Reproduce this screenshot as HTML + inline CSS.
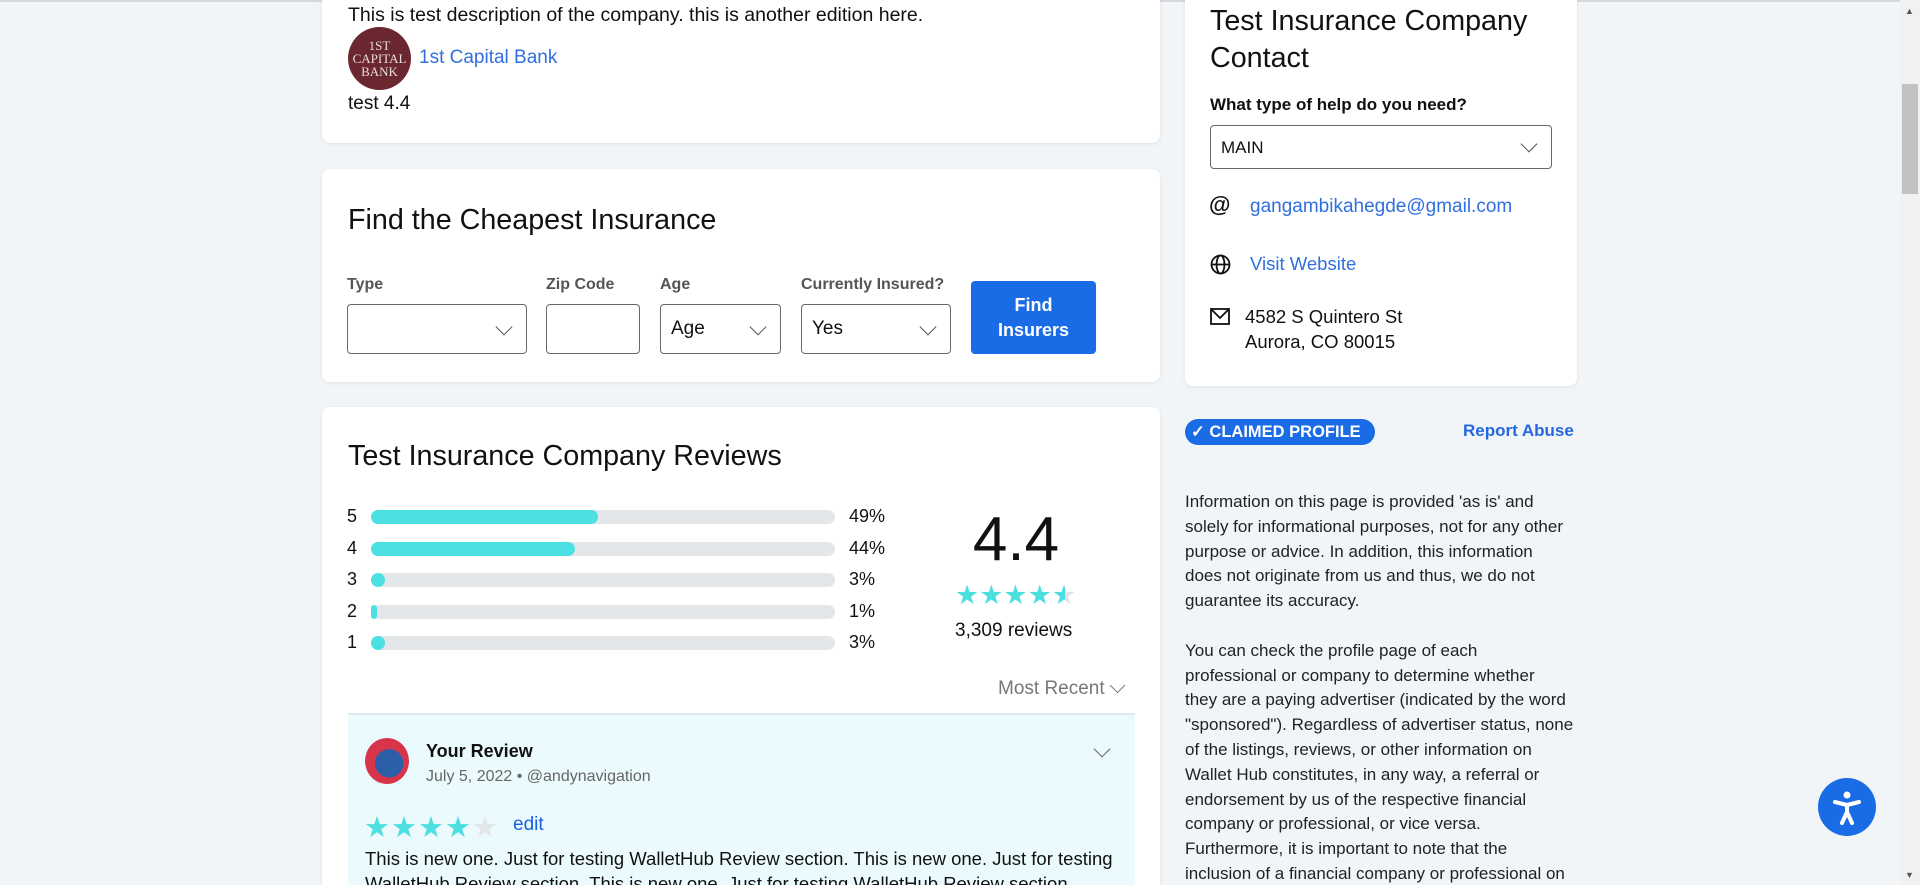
<!DOCTYPE html>
<html><head><meta charset="utf-8">
<style>
*{box-sizing:border-box;margin:0;padding:0}
html,body{width:1920px;height:885px;overflow:hidden}
body{background:#f2f5f8;font-family:"Liberation Sans",Arial,sans-serif;color:#111;position:relative}
.topline{position:absolute;left:0;top:0;width:1900px;height:2px;background:#d5d9de}
.card{position:absolute;background:#fff;border-radius:8px;box-shadow:0 1px 4px rgba(0,0,0,.08)}
.abs{position:absolute;white-space:nowrap}
.blue{color:#2f6fe0}
.sel{position:absolute;border:1px solid #606870;border-radius:4px;background:#fff}
.chev{position:absolute;width:12px;height:12px;border-right:1.6px solid #555;border-bottom:1.6px solid #555;transform:rotate(45deg)}
.lab{position:absolute;font-size:16px;color:#555;font-weight:bold;white-space:nowrap}
.bar{position:absolute;left:371px;width:464px;height:14px;border-radius:7px;background:#e3e7ea}
.fill{height:14px;border-radius:7px;background:#4ce0e2}
.num{position:absolute;left:347px;font-size:18px}
.pct{position:absolute;left:849px;font-size:18px}
.star{color:#4ddfe0}
.disc{position:absolute;left:1185px;top:490px;font-size:17px;line-height:24.8px;color:#222;white-space:nowrap}
</style></head><body>
<div class="topline"></div>

<div class="card" style="left:322px;top:-10px;width:838px;height:153px">
  <div class="abs" style="left:26px;top:14px;font-size:19.5px">This is test description of the company. this is another edition here.</div>
  <div style="position:absolute;left:26px;top:37px;width:63px;height:63px;border-radius:50%;background:#6b2730;color:#e8dcdc;font-family:'Liberation Serif',serif;text-align:center;font-size:13px;line-height:13px;padding-top:12px">1ST<br>CAPITAL<br>BANK</div>
  <div class="abs blue" style="left:97px;top:57px;font-size:19px">1st Capital Bank</div>
  <div class="abs" style="left:26px;top:103px;font-size:19px">test 4.4</div>
</div>

<div class="card" style="left:322px;top:169px;width:838px;height:213px">
  <div class="abs" style="left:26px;top:35px;font-size:28.7px">Find the Cheapest Insurance</div>
  <div class="lab" style="left:25px;top:107px">Type</div>
  <div class="lab" style="left:224px;top:107px">Zip Code</div>
  <div class="lab" style="left:338px;top:107px">Age</div>
  <div class="lab" style="left:479px;top:107px">Currently Insured?</div>
  <div class="sel" style="left:25px;top:135px;width:180px;height:50px"><div class="chev" style="right:16px;top:16px"></div></div>
  <div class="sel" style="left:224px;top:135px;width:94px;height:50px"></div>
  <div class="sel" style="left:338px;top:135px;width:121px;height:50px"><div class="abs" style="left:10px;top:13px;font-size:19px">Age</div><div class="chev" style="right:16px;top:16px"></div></div>
  <div class="sel" style="left:479px;top:135px;width:150px;height:50px"><div class="abs" style="left:10px;top:13px;font-size:19px">Yes</div><div class="chev" style="right:16px;top:16px"></div></div>
  <div style="position:absolute;left:649px;top:112px;width:125px;height:73px;background:#1a6be6;border-radius:4px;color:#fff;font-weight:bold;font-size:18px;text-align:center;line-height:25px;padding-top:12px">Find<br>Insurers</div>
</div>

<div class="card" style="left:322px;top:407px;width:838px;height:500px"></div>
<div class="abs" style="left:348px;top:440px;font-size:28.7px">Test Insurance Company Reviews</div>
<div class="num" style="top:506px">5</div><div class="bar" style="top:510px"><div class="fill" style="width:49%"></div></div><div class="pct" style="top:506px">49%</div>
<div class="num" style="top:538px">4</div><div class="bar" style="top:542px"><div class="fill" style="width:44%"></div></div><div class="pct" style="top:538px">44%</div>
<div class="num" style="top:569px">3</div><div class="bar" style="top:573px"><div class="fill" style="width:14px"></div></div><div class="pct" style="top:569px">3%</div>
<div class="num" style="top:601px">2</div><div class="bar" style="top:605px"><div class="fill" style="width:6px"></div></div><div class="pct" style="top:601px">1%</div>
<div class="num" style="top:632px">1</div><div class="bar" style="top:636px"><div class="fill" style="width:14px"></div></div><div class="pct" style="top:632px">3%</div>
<div class="abs" style="left:956px;top:505px;width:120px;text-align:center;font-size:62px;line-height:70px">4.4</div>
<div class="abs star" style="left:955px;top:580px;font-size:27px;letter-spacing:0px">★★★★<span style="background:linear-gradient(90deg,#4ddfe0 55%,#dfe3e6 55%);-webkit-background-clip:text;color:transparent">★</span></div>
<div class="abs" style="left:955px;top:620px;font-size:19px">3,309 reviews</div>
<div class="abs" style="left:998px;top:678px;font-size:19px;color:#777">Most Recent</div>
<div class="chev" style="left:1112px;top:680px;width:11px;height:11px;border-color:#777"></div>

<div style="position:absolute;left:348px;top:713px;width:787px;height:180px;background:#ebfbfd;border-top:2px solid #dfe8ea"></div>
<div style="position:absolute;left:365px;top:738px;width:44px;height:46px;border-radius:50%;background:radial-gradient(circle at 55% 55%,#2d5fa8 40%,#d8354a 41%)"></div>
<div class="abs" style="left:426px;top:741px;font-size:18px;font-weight:bold">Your Review</div>
<div class="abs" style="left:426px;top:768px;font-size:16px;color:#666">July 5, 2022 • @andynavigation</div>
<div class="chev" style="left:1096px;top:743px;width:12px;height:12px;border-color:#666"></div>
<div class="abs" style="left:364px;top:810px;font-size:29px;letter-spacing:1px"><span class="star">★★★★</span><span style="color:#e3e6e8">★</span></div>
<div class="abs blue" style="left:513px;top:814px;font-size:19px;color:#1a5fe0">edit</div>
<div class="abs" style="left:365px;top:848px;font-size:18.5px">This is new one. Just for testing WalletHub Review section. This is new one. Just for testing</div>
<div class="abs" style="left:365px;top:873px;font-size:18.5px">WalletHub Review section. This is new one. Just for testing WalletHub Review section.</div>

<div class="card" style="left:1185px;top:-10px;width:392px;height:396px"></div>
<div class="abs" style="left:1210px;top:3px;font-size:28.7px;line-height:37px">Test Insurance Company<br>Contact</div>
<div class="abs" style="left:1210px;top:95px;font-size:17px;font-weight:bold">What type of help do you need?</div>
<div class="sel" style="left:1210px;top:125px;width:342px;height:44px"><div class="abs" style="left:10px;top:12px;font-size:17px">MAIN</div><div class="chev" style="right:16px;top:12px"></div></div>
<div class="abs" style="left:1209px;top:192px;font-size:22px;font-weight:bold">@</div>
<div class="abs blue" style="left:1250px;top:196px;font-size:19px">gangambikahegde@gmail.com</div>
<svg class="abs" style="left:1210px;top:254px" width="21" height="21" viewBox="0 0 21 21" fill="none" stroke="#111" stroke-width="1.8"><circle cx="10.5" cy="10.5" r="9"/><ellipse cx="10.5" cy="10.5" rx="4" ry="9"/><line x1="1.5" y1="10.5" x2="19.5" y2="10.5"/></svg>
<div class="abs blue" style="left:1250px;top:253px;font-size:18.5px">Visit Website</div>
<svg class="abs" style="left:1210px;top:308px" width="20" height="17" viewBox="0 0 20 17" fill="none" stroke="#111" stroke-width="1.8"><rect x="1" y="1" width="18" height="15"/><path d="M1 1 L10 10 L19 1"/></svg>
<div class="abs" style="left:1245px;top:304px;font-size:18.5px;line-height:25px">4582 S Quintero St<br>Aurora, CO 80015</div>

<div style="position:absolute;left:1185px;top:419px;width:190px;height:26px;border-radius:13px;background:#1a6be6;color:#fff;font-weight:bold;font-size:16.5px;line-height:26px;padding-left:6px;white-space:nowrap">✓ CLAIMED PROFILE</div>
<div class="abs blue" style="left:1463px;top:421px;font-size:17px;font-weight:bold;color:#2468e0">Report Abuse</div>

<div class="disc">Information on this page is provided 'as is' and<br>solely for informational purposes, not for any other<br>purpose or advice. In addition, this information<br>does not originate from us and thus, we do not<br>guarantee its accuracy.<br><br>You can check the profile page of each<br>professional or company to determine whether<br>they are a paying advertiser (indicated by the word<br>"sponsored"). Regardless of advertiser status, none<br>of the listings, reviews, or other information on<br>Wallet Hub constitutes, in any way, a referral or<br>endorsement by us of the respective financial<br>company or professional, or vice versa.<br>Furthermore, it is important to note that the<br>inclusion of a financial company or professional on</div>

<div style="position:absolute;left:1818px;top:778px;width:58px;height:58px;border-radius:50%;background:#1a6be6">
<svg width="58" height="58" viewBox="0 0 58 58" fill="none" stroke="#fff" stroke-width="4" stroke-linecap="round" stroke-linejoin="round"><circle cx="29" cy="17" r="3.5" fill="#fff" stroke="none"/><path d="M17 24 L29 27 L41 24 M29 27 L29 34 M29 34 L24 45 M29 34 L34 45"/></svg></div>

<div style="position:absolute;left:1900px;top:0;width:20px;height:885px;background:#f1f1f1"></div>
<div style="position:absolute;left:1902px;top:84px;width:16px;height:110px;background:#c1c1c1"></div>
<div class="abs" style="left:1905px;top:6px;font-size:9px;color:#555">▲</div>
<div class="abs" style="left:1905px;top:870px;font-size:9px;color:#555">▼</div>
</body></html>
